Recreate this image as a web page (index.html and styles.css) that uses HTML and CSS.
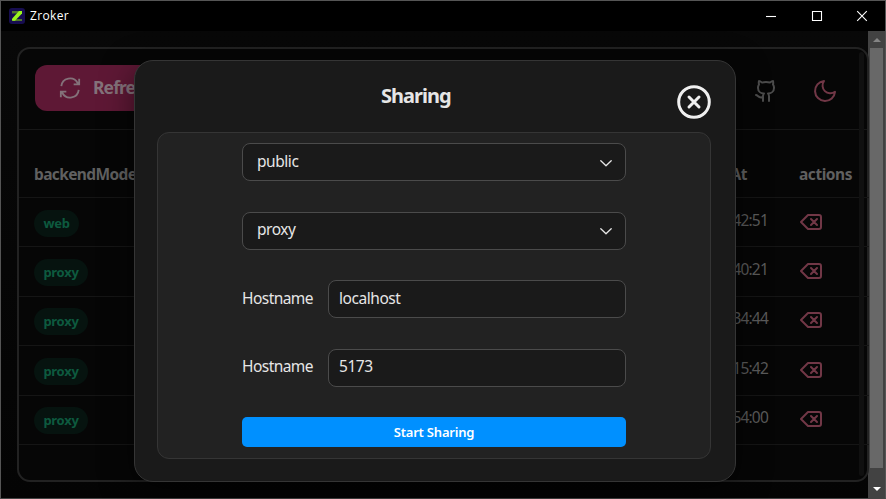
FILE: index.html
```html
<!DOCTYPE html>
<html lang="en">
<head>
<meta charset="utf-8">
<title>Zroker</title>
<link rel="stylesheet" href="styles.css">
</head>
<body>
<svg class="defs" aria-hidden="true">
  <symbol id="del" viewBox="0 0 24 24"><path d="M20 5H9l-7 7 7 7h11a2 2 0 0 0 2-2V7a2 2 0 0 0-2-2ZM12 9l6 6M18 9l-6 6"/></symbol>
  <symbol id="chev" viewBox="0 0 12 7"><path d="M.8.8 6 5.8 11.2.8"/></symbol>
</svg>
<div class="window">
  <header class="titlebar">
    <svg class="logo" viewBox="0 0 16 16"><rect width="16" height="16" rx="3" fill="#170d50"/><path d="M3 3h9v2.5H3zM4 11h9v2H4z" fill="#52772d"/><path d="M10 3h3v2.5L6 12.8H3v-2z" fill="#9bf61c"/></svg>
    <span class="name">Zroker</span>
    <div class="controls">
      <svg viewBox="0 0 12 12"><path d="M1 6.5h10"/></svg>
      <svg viewBox="0 0 12 12"><path d="M1.5 1.5h9v9h-9z"/></svg>
      <svg viewBox="0 0 12 12"><path d="M1.2 1.2l9.6 9.6M10.800 1.200l-9.600 9.600"/></svg>
    </div>
  </header>
  <div class="body">
    <main class="page">
      <section class="card">
        <div class="toolbar">
          <button class="refresh"><svg viewBox="0 0 24 24"><path d="M2.500 10a9.500 9.500 0 0 1 17.800-3.500L22 8M22 2v6h-6M21.500 14a9.500 9.500 0 0 1-17.800 3.500L2 16M2 22v-6h6"/></svg><span>Refresh</span></button>
          <div class="links">
            <svg class="git" viewBox="0 0 24 24"><path d="M15 22v-4a4.800 4.800 0 0 0-1-3.500c3 0 6-2 6-5.500.08-1.250-.27-2.480-1-3.500.28-1.150.28-2.350 0-3.500 0 0-1 0-3 1.500-2.640-.5-5.360-.5-8 0C6 2 5 2 5 2c-.3 1.150-.3 2.350 0 3.500A5.400 5.400 0 0 0 4 9c0 3.500 3 5.500 6 5.500-.39.49-.68 1.050-.85 1.650S8.930 17.380 9 18v4M9 18c-4.510 2-5-2-7-2"/></svg>
            <svg class="moon" viewBox="0 0 24 24"><path d="M11 2a7.800 7.800 0 0 0 11 10.800A10 10 0 1 1 11 2Z"/></svg>
          </div>
        </div>
        <div class="row head"><b class="mode">backendMode</b><b class="at">At</b><b class="act">actions</b></div>
        <div class="row"><div class="mode"><span class="tag web">web</span></div><span class="time">42:51</span><svg class="del"><use href="#del"/></svg></div>
        <div class="row"><div class="mode"><span class="tag">proxy</span></div><span class="time">40:21</span><svg class="del"><use href="#del"/></svg></div>
        <div class="row"><div class="mode"><span class="tag">proxy</span></div><span class="time">34:44</span><svg class="del"><use href="#del"/></svg></div>
        <div class="row"><div class="mode"><span class="tag">proxy</span></div><span class="time">15:42</span><svg class="del"><use href="#del"/></svg></div>
        <div class="row"><div class="mode"><span class="tag">proxy</span></div><span class="time">54:00</span><svg class="del"><use href="#del"/></svg></div>
        <i class="rail"></i>
      </section>
    </main>
    <aside class="scrollbar"><svg viewBox="0 0 8 4"><path d="M0 4 4 0l4 4z" fill="#858585"/></svg><i class="thumb"></i><svg viewBox="0 0 8 4"><path d="M0 0l4 4 4-4z" fill="#fff"/></svg></aside>
  </div>
</div>
<div class="modal">
  <div class="modal-head"><h2>Sharing</h2><svg class="close" viewBox="0 0 34 34"><circle cx="17" cy="17" r="15.300"/><path d="M12 12l10 10M22 12L12 22"/></svg></div>
  <div class="panel">
    <div class="select"><span>public</span><svg><use href="#chev"/></svg></div>
    <div class="select"><span>proxy</span><svg><use href="#chev"/></svg></div>
    <div class="field"><label>Hostname</label><div class="input"><span>localhost</span></div></div>
    <div class="field"><label>Hostname</label><div class="input"><span>5173</span></div></div>
    <button class="start">Start Sharing</button>
  </div>
</div>
</body>
</html>
```

FILE: styles.css
```css
* { box-sizing: border-box; }
body { margin: 0; width: 886px; height: 499px; overflow: hidden; background: #060606; color: #e6e6e6; font-family: "Noto Sans", "Open Sans", sans-serif; font-size: 15px; }
svg { fill: none; stroke: currentColor; stroke-linecap: round; stroke-linejoin: round; stroke-width: 2; flex: none; }
.defs { position: absolute; width: 0; height: 0; }
button { border: 0; font: inherit; }
.window { width: 886px; height: 499px; border: 1px solid #555; border-bottom-color: #444; display: flex; flex-direction: column; }
.titlebar { height: 30px; flex: none; background: #000; display: flex; align-items: center; padding-left: 8px; color: #fff; }
.logo { width: 16px; height: 16px; stroke: none; margin-top: -1px; }
.name { font-family: "Open Sans", sans-serif; font-size: 12px; margin: -2px 0 0 5px; letter-spacing: .35px; }
.controls { margin-left: auto; display: flex; gap: 33.500px; padding-right: 17px; margin-top: -1px; }
.controls svg { width: 12px; height: 12px; stroke-width: 1.1; stroke-linecap: butt; stroke-linejoin: miter; }
.body { flex: 1; display: flex; min-height: 0; }
.page { width: 867px; padding: 16px 0 0 16px; background: linear-gradient(#080808, #040404); }
.card { position: relative; width: 852px; height: 435px; border: 2px solid #222; border-radius: 13px; background: #060606; }
.toolbar { height: 81px; border-bottom: 1px solid #171717; display: flex; justify-content: space-between; padding: 16px 30px 0 16px; }
.refresh { width: 150px; height: 46px; border-radius: 12px; background: #5e1835; color: #84727a; display: flex; align-items: center; gap: 12px; padding: 0 0 0 24px; font-weight: 700; font-size: 17.500px; letter-spacing: -.9px; }
.refresh svg { width: 22px; height: 22px; stroke-linecap: butt; stroke-linejoin: miter; margin-top: -1px; }
.refresh span { margin-top: -3px; }
.links { display: flex; gap: 35px; padding-top: 14px; color: #4c4c4c; }
.links svg { width: 24px; height: 24px; }
.links .moon { color: #713746; }
.row { height: 49.400px; width: 850px; border-bottom: 1px solid #151515; display: flex; align-items: center; padding-left: 15px; color: #5a5a5a; }
.head { height: 68px; padding-top: 20px; color: #606060; font-size: 15.500px; }
.mode { width: 350px; letter-spacing: -.62px; }
.at { width: 364px; text-align: right; letter-spacing: -.5px; padding-right: 1px; }
.act { margin-left: 51px; letter-spacing: -.45px; }
.tag { display: inline-flex; align-items: center; justify-content: center; width: 54px; height: 27px; border-radius: 14px; background: #06130f; color: #0d5a3f; font-weight: 700; font-size: 13px; letter-spacing: -.3px; padding-bottom: 1px; margin-top: 2px; }
.web { width: 45px; }
.time { width: 384px; text-align: right; font-size: 15.500px; letter-spacing: -.8px; margin-top: -5px; }
.del { width: 24px; height: 24px; margin: -1px 0 0 31px; color: #713746; }
.rail { position: absolute; right: 3px; top: 3px; width: 5px; height: 424px; border-radius: 3px; background: #101010; }
.scrollbar { width: 17px; background: #424242; display: flex; flex-direction: column; align-items: center; padding: 7px 0 7px; }
.scrollbar svg { width: 8px; height: 4px; stroke: none; }
.thumb { width: 13px; height: 420px; margin: 6px 0 auto; background: #686868; }
.modal { position: absolute; left: 134px; top: 60px; width: 602px; height: 422px; border: 1px solid #353535; border-radius: 19px; background: #1a1a1a; padding: 0 24px 22px 22px; display: flex; flex-direction: column; box-shadow: 0 8px 32px rgba(0,0,0,.5); }
.modal-head { height: 71px; flex: none; display: flex; align-items: center; padding-left: 224px; }
h2 { margin: -2px 0 0; font-size: 20px; line-height: 26px; letter-spacing: -1px; }
.close { width: 34px; height: 34px; margin: 10px 0 0 auto; color: #f0f0f0; stroke-width: 3; }
.panel { height: 327px; border: 1px solid #353535; border-radius: 12px; background: #222; padding: 10px 84px 0; display: flex; flex-direction: column; gap: 30.500px; }
.select, .input { height: 38px; border: 1px solid #4b4b4b; border-radius: 8px; background: #1a1a1a; display: flex; align-items: center; }
.select { justify-content: space-between; padding: 0 13.500px 0 14px; flex: none; font-size: 15.500px; letter-spacing: -.45px; }
.select span, .input span, label { margin-top: -3px; }
.select svg { width: 12px; height: 7px; stroke-width: 1.300; margin-top: 2px; }
.field { display: flex; align-items: center; height: 38px; flex: none; font-size: 15.500px; }
label { width: 86px; letter-spacing: -.55px; }
.input { flex: 1; padding-left: 10px; letter-spacing: -.45px; }
.start { height: 30px; flex: none; border-radius: 5px; background: #0090ff; color: #fff; font-size: 13px; font-weight: 600; letter-spacing: -.2px; padding: 0; }
```
